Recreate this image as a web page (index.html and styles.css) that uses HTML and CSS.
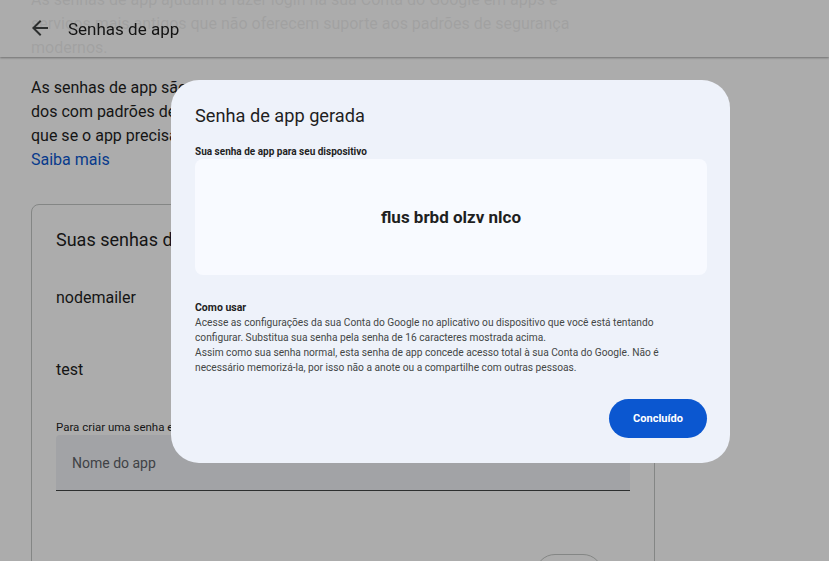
FILE: index.html
```html
<!DOCTYPE html>
<html lang="pt-BR">
<head>
<meta charset="utf-8">
<title>Senhas de app</title>
<link rel="stylesheet" href="styles.css">
</head>
<body>
<header class="topbar">
  <svg class="back" width="24" height="24" viewBox="0 0 24 24"><path d="M20 11H7.83l5.59-5.59L12 4l-8 8 8 8 1.41-1.41L7.83 13H20v-2z" fill="#444746"/></svg>
  <span class="topbar-title">Senhas de app</span>
</header>

<main class="page">
  <p class="para">As senhas de app ajudam a fazer login na sua Conta do Google em apps e<br>serviços mais antigos que não oferecem suporte aos padrões de segurança<br>modernos.</p>
  <p class="para">As senhas de app são menos seguras do que usar apps e serviços atualiza-<br>dos com padrões de segurança modernos. Antes de criar uma senha de app, verifi-<br>que se o app precisa dela para fazer login.<br><a class="link" href="#">Saiba mais</a></p>

  <section class="card">
    <h2 class="card-title">Suas senhas de app</h2>
    <div class="row">nodemailer</div>
    <div class="row">test</div>
    <div class="hint">Para criar uma senha específica, digite um nome abaixo…</div>
    <div class="field">Nome do app</div>
    <div class="actions"><span class="outline-btn">Criar</span></div>
  </section>
</main>

<div class="scrim">
  <div class="dialog">
    <h1 class="dlg-title">Senha de app gerada</h1>
    <div class="dlg-label">Sua senha de app para seu dispositivo</div>
    <div class="pw-box"><span class="pw">flus brbd olzv nlco</span></div>
    <div class="howto">
      <div class="howto-title">Como usar</div>
      <div class="howto-text">Acesse as configurações da sua Conta do Google no aplicativo ou dispositivo que você está tentando<br>configurar. Substitua sua senha pela senha de 16 caracteres mostrada acima.<br>Assim como sua senha normal, esta senha de app concede acesso total à sua Conta do Google. Não é<br>necessário memorizá-la, por isso não a anote ou a compartilhe com outras pessoas.</div>
    </div>
    <div class="dlg-actions"><button class="done">Concluído</button></div>
  </div>
</div>
</body>
</html>
```

FILE: styles.css
```css
* { box-sizing: border-box; }
html, body { margin: 0; padding: 0; height: 100%; overflow: hidden; }
body {
  background: #ffffff;
  font-family: Roboto, "Liberation Sans", Arial, sans-serif;
  color: #1f1f1f;
}

.topbar {
  position: fixed;
  top: 0; left: 0; right: 0;
  height: 57px;
  background: rgba(255,255,255,0.93);
  box-shadow: 0 1px 2px rgba(0,0,0,0.35);
  display: flex;
  align-items: center;
  padding-left: 28px;
  gap: 16px;
  z-index: 2;
}
.back { display: block; margin-top: -2px; }
.topbar-title { font-size: 17px; color: #1f1f1f; margin-top: 1px; }

.page {
  margin-top: -12px;
  padding: 0 0 0 31px;
  width: 655px;
}
.para {
  margin: 0 0 16px 0;
  font-size: 16px;
  line-height: 24px;
  white-space: nowrap;
}
.link { color: #0b57d0; text-decoration: none; }

.card {
  margin-top: 32px;
  border: 1px solid #c4c7c5;
  border-radius: 8px;
  padding: 23px 24px 0 24px;
  height: 400px;
}
.card-title { margin: 0; font-size: 18px; font-weight: 400; line-height: 24px; white-space: nowrap; }
.row {
  height: 72px;
  display: flex;
  align-items: center;
  font-size: 16px;
}
.row:first-of-type { margin-top: 9px; }
.hint { font-size: 11.5px; line-height: 16px; margin-top: 14px; color: #1f1f1f; white-space: nowrap; }
.field {
  height: 56px;
  background: #f0f2f6;
  border-bottom: 1px solid #444746;
  border-radius: 4px 4px 0 0;
  display: flex;
  align-items: center;
  padding-left: 16px;
  font-size: 14px;
  color: #5f6368;
}
.actions { display: flex; justify-content: flex-end; margin-top: 63px; padding-right: 27px; }
.outline-btn {
  border: 1px solid #c4c7c5;
  border-radius: 20px;
  height: 40px;
  width: 68px;
  display: flex; align-items: center; justify-content: center;
  font-size: 14px; color: #0b57d0;
}

.scrim {
  position: fixed;
  inset: 0;
  background: rgba(0,0,0,0.325);
  z-index: 5;
  padding: 80px 0 0 171px;
}
.dialog {
  width: 559px;
  height: 383px;
  background: #eef2fa;
  border-radius: 28px;
  padding: 24px 23px 24px 24px;
  display: flex;
  flex-direction: column;
}
.dlg-title { margin: 0; font-size: 18.2px; font-weight: 400; line-height: 24px; color: #1f1f1f; }
.dlg-label { margin-top: 17px; font-size: 10px; font-weight: 700; line-height: 13px; color: #1f1f1f; }
.pw-box {
  margin-top: 1px;
  height: 116px;
  background: #f8faff;
  border-radius: 8px;
  display: flex; align-items: center; justify-content: center;
}
.pw { font-size: 17px; font-weight: 700; color: #1f1f1f; }
.howto { margin-top: 25px; }
.howto-title { font-size: 10.5px; font-weight: 700; line-height: 15px; color: #1f1f1f; }
.howto-text { font-size: 10.2px; line-height: 15px; color: #444746; white-space: nowrap; }
.dlg-actions { display: flex; justify-content: flex-end; margin-top: 24px; }
.done {
  width: 98px; height: 39px;
  border: 0;
  border-radius: 20px;
  background: #0b57d0;
  color: #fff;
  font-family: Roboto, "Liberation Sans", Arial, sans-serif;
  font-size: 11px;
  font-weight: 700;
}
```
